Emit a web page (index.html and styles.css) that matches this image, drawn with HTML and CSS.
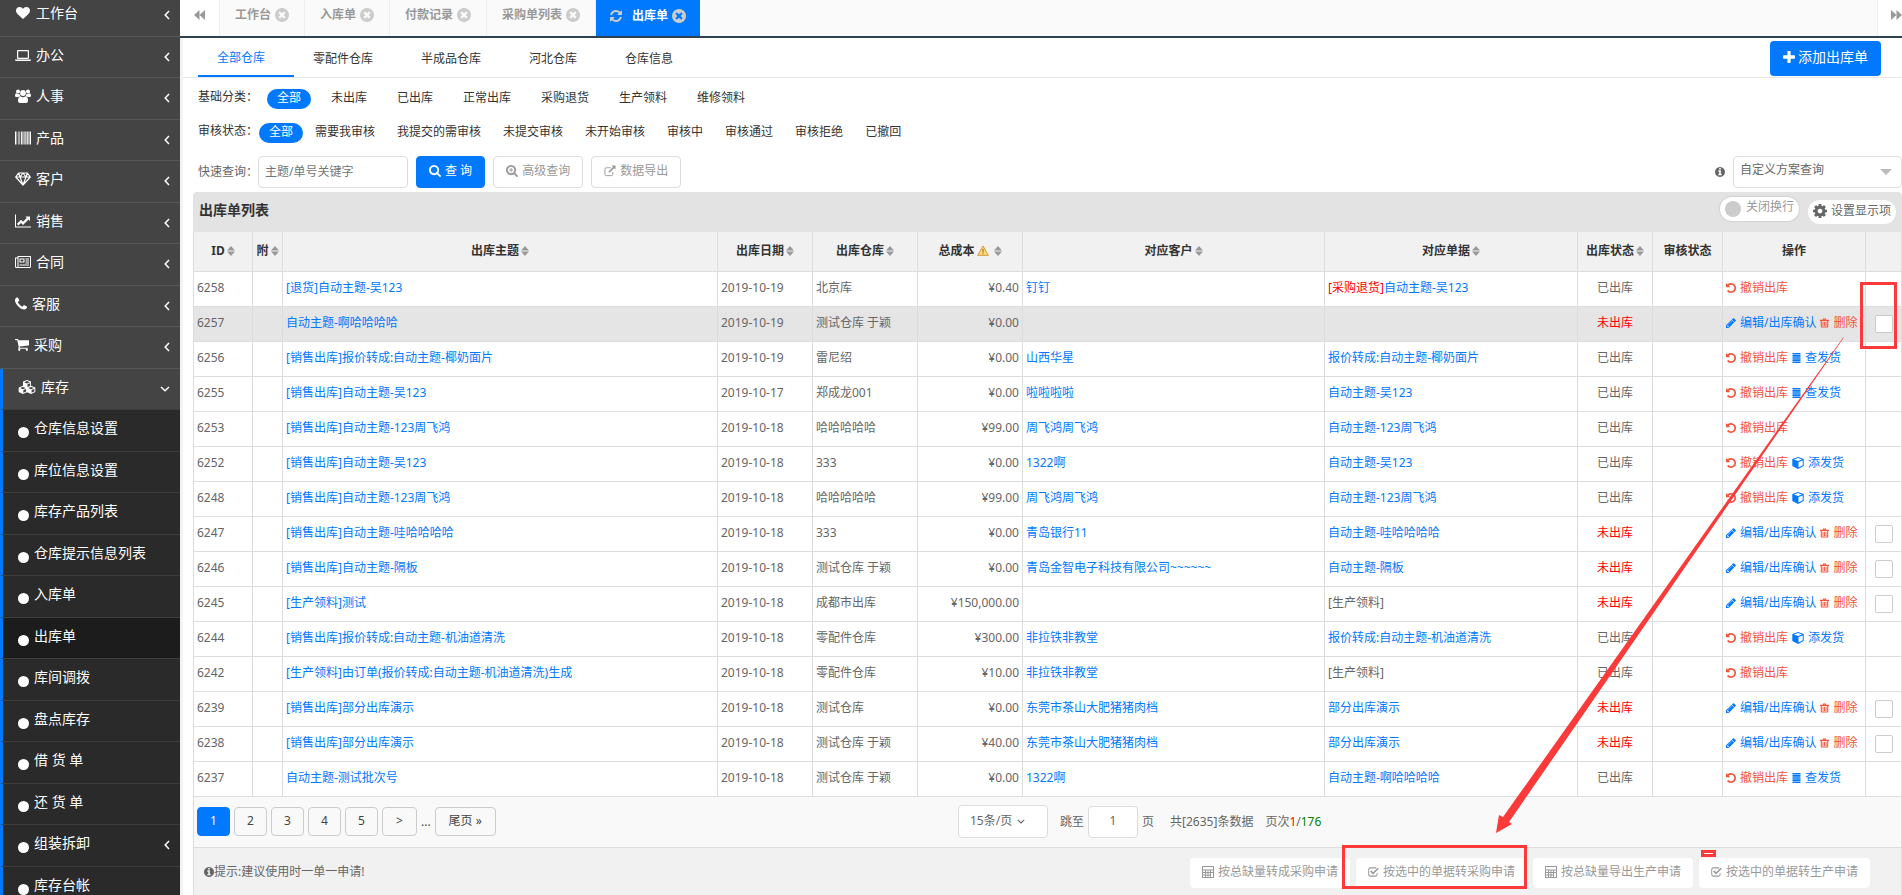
FILE: index.html
```html
<!DOCTYPE html>
<html lang="zh-CN">
<head>
<meta charset="utf-8">
<title>出库单</title>
<link rel="stylesheet" href="styles.css">
</head>
<body>
<svg class="defs" aria-hidden="true">
<symbol id="heart" viewBox="0 0 1792 1792"><path d="M896 1664q-26 0-44-18l-624-602q-10-8-27.500-26t-55.500-65.500-68-97.500-53.500-121-23.500-138q0-220 127-344t351-124q62 0 126.500 21.500t120 58 95.500 68.500 76 68q36-36 76-68t95.500-68.500 120-58 126.500-21.500q224 0 351 124t127 344q0 221-229 450l-623 600q-18 18-44 18z"/></symbol>
<symbol id="laptop" viewBox="0 0 16 14"><path fill-rule="evenodd" d="M3 2h10a1 1 0 0 1 1 1v7a1 1 0 0 1-1 1H3a1 1 0 0 1-1-1V3a1 1 0 0 1 1-1zm.2 1.200v6.600h9.600V3.200zM0 11.500h16v.8q0 .7-1.500.7h-13Q0 13 0 12.300z"/></symbol>
<symbol id="users" viewBox="0 0 16 14"><circle cx="3" cy="2.400" r="2"/><circle cx="13" cy="2.400" r="2"/><circle cx="8" cy="4" r="2.900"/><path d="M0 6.500Q0 4.300 1.500 4.300q1.500 1 3 .4Q4.600 6.300 5.400 7 4 7.200 3.300 8H1.200Q0 8 0 6.500zM16 6.500q0-2.200-1.500-2.200-1.500 1-3 .4-.1 1.600-.9 2.300 1.400.2 2.100 1h2.100Q16 8 16 6.500zM3 12q0-4.600 2.500-4.700Q8 9 10.500 7.300 13 7.400 13 12q0 2-2 2H5q-2 0-2-2z"/></symbol>
<symbol id="barcode" viewBox="0 0 15 12"><path d="M0 0h1v12H0zM1.500 0h.5v12h-.5zM3 0h.5v12H3zM4 0h.5v12H4zM5.500 0h1v12h-1zM7 0h.5v12H7zM8 0h1v12H8zM9.700 0h.8v12h-.8zM11 0h1v12h-1zM12.500 0h.5v12h-.5zM13.600 0H15v12h-1.400z"/></symbol>
<symbol id="diamond" viewBox="0 0 16 14"><path fill="none" stroke="currentColor" stroke-width="1.200" stroke-linejoin="round" d="M3.600 1h8.800L15.300 5 8 13 .7 5zM.7 5h14.600M8 1L5 5l3 8 3-8zM3.600 1L5 5M12.400 1L11 5"/></symbol>
<symbol id="chart" viewBox="0 0 16 13"><path d="M0 0h1v12h15v1H0z"/><path d="M2 9.300L6 5.200l2 2L11.800 3.400 10.500 2H15v4.500L13.500 5 8 10.500l-2-2-2.700 2.600z"/></symbol>
<symbol id="news" viewBox="0 0 16 12"><path fill-rule="evenodd" d="M2.500 0H16v10.500q0 1.500-1.500 1.500h-13Q0 12 0 10.500V1.500h2.500zM1 2.500v8q0 .5.700.5t.8-.5v-8zM3.500 1v9.500q0 .3-.1.500h11q.6 0 .6-.5V1zM4.500 2.500h5v4h-5zm1 1v2h3v-2zM10.500 2.500H14v1h-3.500zM10.500 4.500H14v1h-3.500zM10.500 6.500H14v1h-3.500zM4.500 8.500H14v1H4.500z"/></symbol>
<symbol id="phone" viewBox="192 192 1408 1408"><path d="M1600 1240q0 27-10 70.500t-21 68.500q-21 50-122 106-94 51-186 51-27 0-53-3.500t-57.500-12.500-47-14.500-55.500-20.500-49-18q-98-35-175-83-127-79-264-216t-216-264q-48-77-83-175-3-9-18-49t-20.500-55.500-14.500-47-12.500-57.500-3.500-53q0-92 51-186 56-101 106-122 25-11 68.500-21t70.500-10q14 0 21 3 18 6 53 76 11 19 30 54t35 63.500 31 53.500q3 4 17.500 25t21.500 35.500 7 28.500q0 20-28.500 50t-62 55-62 53-28.500 46q0 9 5 22.500t8.500 20.500 14 24 11.500 19q76 137 174 235t235 174q2 1 19 11.500t24 14 20.500 8.500 22.500 5q18 0 46-28.500t53-62 55-62 50-28.500q14 0 28.500 7t35.500 21.500 25 17.500q25 15 53.500 31t63.500 35 54 30q70 35 76 53 3 7 3 21z"/></symbol>
<symbol id="cart" viewBox="64 128 1664 1664"><path d="M704 1536q0 52-38 90t-90 38-90-38-38-90 38-90 90-38 90 38 38 90zm896 0q0 52-38 90t-90 38-90-38-38-90 38-90 90-38 90 38 38 90zm128-1088v512q0 24-16.500 42.500t-40.500 21.500l-1044 122q13 60 13 70 0 16-24 64h920q26 0 45 19t19 45-19 45-45 19h-1024q-26 0-45-19t-19-45q0-11 8-31.500t16-36 21.500-40 15.500-29.500l-177-823h-204q-26 0-45-19t-19-45 19-45 45-19h256q16 0 28.500 6.500t19.500 15.500 13 24.500 8 26 5.500 29.500 4.500 26h1201q26 0 45 19t19 45z"/></symbol>
<symbol id="cubes" viewBox="0 0 18 14"><path fill-rule="evenodd" d="M9 0l4 1.600v4.200l4.300 1.800v4.500L13.200 14 9 12.200 4.800 14 .7 12.100V7.600L5 5.800V1.600zM9 1.100L6.200 2.200 9 3.400l2.800-1.200zM9.500 4.300v2.600l2.600-1V3.200zM4.900 6.900L2.100 8l2.800 1.200L7.700 8zM5.400 10.100v2.600l2.700-1.200V8.900zM13.100 6.900L10.300 8l2.800 1.200L15.900 8zM13.600 10.100v2.600l2.700-1.200V8.900z"/></symbol>
<symbol id="left" viewBox="0 0 6 10"><path fill="none" stroke="currentColor" stroke-width="1.500" d="M5 1L1.200 5 5 9"/></symbol>
<symbol id="down" viewBox="0 0 10 6"><path fill="none" stroke="currentColor" stroke-width="1.500" d="M1 1l4 3.800L9 1"/></symbol>
<symbol id="backward" viewBox="0 0 11 10"><path d="M5.500 0v10L0 5zM11 0v10L5.500 5z"/></symbol>
<symbol id="forward" viewBox="0 0 11 10"><path d="M0 0v10l5.500-5zM5.500 0v10L11 5z"/></symbol>
<symbol id="close" viewBox="128 128 1536 1536"><path d="M1277 1122q0-26-19-45l-181-181 181-181q19-19 19-45 0-27-19-46l-90-90q-19-19-46-19-26 0-45 19l-181 181-181-181q-19-19-45-19-27 0-46 19l-90 90q-19 19-19 46 0 26 19 45l181 181-181 181q-19 19-19 45 0 27 19 46l90 90q19 19 46 19 26 0 45-19l181-181 181 181q19 19 45 19 27 0 46-19l90-90q19-19 19-46zm387-226q0 209-103 385.500t-279.500 279.500-385.500 103-385.500-103-279.500-279.500-103-385.500 103-385.500 279.500-279.500 385.500-103 385.500 103 279.500 279.500 103 385.500z"/></symbol>
<symbol id="info" viewBox="128 128 1536 1536"><path d="M1152 1376v-160q0-14-9-23t-23-9h-96v-512q0-14-9-23t-23-9h-320q-14 0-23 9t-9 23v160q0 14 9 23t23 9h96v320h-96q-14 0-23 9t-9 23v160q0 14 9 23t23 9h448q14 0 23-9t9-23zm-128-896v-160q0-14-9-23t-23-9h-192q-14 0-23 9t-9 23v160q0 14 9 23t23 9h192q14 0 23-9t9-23zm640 416q0 209-103 385.500t-279.500 279.500-385.500 103-385.500-103-279.500-279.500-103-385.500 103-385.500 279.500-279.500 385.500-103 385.500 103 279.500 279.500 103 385.500z"/></symbol>
<symbol id="refresh" viewBox="128 128 1536 1536"><path d="M1639 1056q0 5-1 7-64 268-268 434.500t-478 166.500q-146 0-282.500-55t-243.500-157l-129 129q-19 19-45 19t-45-19-19-45v-448q0-26 19-45t45-19h448q26 0 45 19t19 45-19 45l-137 137q71 66 161 102t187 36q134 0 250-65t186-179q11-17 53-117 8-23 30-23h192q13 0 22.500 9.500t9.500 22.500zm25-800v448q0 26-19 45t-45 19h-448q-26 0-45-19t-19-45 19-45l138-138q-148-137-349-137-134 0-250 65t-186 179q-11 17-53 117-8 23-30 23h-199q-13 0-22.500-9.500t-9.500-22.500v-7q65-268 270-434.500t480-166.500q146 0 284 55.500t245 156.500l130-129q19-19 45-19t45 19 19 45z"/></symbol>
<symbol id="plus" viewBox="192 128 1408 1408"><path d="M1600 736v192q0 40-28 68t-68 28h-416v416q0 40-28 68t-68 28h-192q-40 0-68-28t-28-68v-416h-416q-40 0-68-28t-28-68v-192q0-40 28-68t68-28h416v-416q0-40 28-68t68-28h192q40 0 68 28t28 68v416h416q40 0 68 28t28 68z"/></symbol>
<symbol id="search" viewBox="64 128 1664 1664"><path d="M1216 832q0-185-131.500-316.500t-316.500-131.500-316.500 131.500-131.500 316.500 131.500 316.500 316.500 131.500 316.500-131.500 131.500-316.500zm512 832q0 52-38 90t-90 38q-54 0-90-38l-343-342q-179 124-399 124-143 0-273.500-55.500t-225-150-150-225-55.500-273.500 55.500-273.500 150-225 225-150 273.500-55.500 273.500 55.500 225 150 150 225 55.500 273.500q0 220-124 399l343 343q37 37 37 90z"/></symbol>
<symbol id="searchplus" viewBox="64 128 1664 1664"><path d="M1216 832q0-185-131.500-316.500t-316.500-131.500-316.500 131.500-131.500 316.500 131.500 316.500 316.500 131.500 316.500-131.500 131.500-316.500zm512 832q0 52-38 90t-90 38q-54 0-90-38l-343-342q-179 124-399 124-143 0-273.500-55.500t-225-150-150-225-55.500-273.500 55.500-273.500 150-225 225-150 273.500-55.500 273.500 55.500 225 150 150 225 55.500 273.500q0 220-124 399l343 343q37 37 37 90z"/><path d="M704 544h128v224h224v128H832v224H704V896H480V768h224z"/></symbol>
<symbol id="export" viewBox="0 0 13 12"><path fill="none" stroke="currentColor" d="M7.500 2.500h-5a1.500 1.500 0 0 0-1.500 1.500v5.500A1.500 1.500 0 0 0 2.500 11H8a1.500 1.500 0 0 0 1.500-1.500V7"/><path d="M8 0h4.500v4.500L11 3 6 8 4.700 6.700l5-5z"/></symbol>
<symbol id="cog" viewBox="128 128 1536 1536"><path d="M1152 896q0-106-75-181t-181-75-181 75-75 181 75 181 181 75 181-75 75-181zm512-109v222q0 12-8 23t-20 13l-185 28q-19 54-39 91 35 50 107 138 10 12 10 25t-9 23q-27 37-99 108t-94 71q-12 0-26-9l-138-108q-44 23-91 38-16 136-29 186-7 28-36 28h-222q-14 0-24.500-8.500t-11.500-21.500l-28-184q-49-16-90-37l-141 107q-10 9-25 9-14 0-25-11-126-114-165-168-7-10-7-23 0-12 8-23 15-21 51-66.500t54-70.500q-27-50-41-99l-183-27q-13-2-21-12.500t-8-23.500v-222q0-12 8-23t19-13l186-28q14-46 39-92-40-57-107-138-10-12-10-24 0-10 9-23 26-36 98.500-107.500t94.500-71.500q13 0 26 10l138 107q44-23 91-38 16-136 29-186 7-28 36-28h222q14 0 24.500 8.500t11.500 21.500l28 184q49 16 90 37l142-107q9-9 24-9 13 0 25 10 129 119 165 170 7 8 7 22 0 12-8 23-15 21-51 66.500t-54 70.500q26 50 41 98l183 28q13 2 21 12.500t8 23.500z"/></symbol>
<symbol id="sort" viewBox="0 0 8 10"><path d="M4 0l4 4.500H0zM0 5.500h8L4 10z"/></symbol>
<symbol id="warn" viewBox="0 0 12 11"><path fill="#f9dc7c" stroke="#d39a35" stroke-linejoin="round" d="M6 1l5.300 9.300H.7z"/><path fill="#a8701c" d="M5.400 4h1.200v3.500H5.400zM5.400 8.200h1.200v1.100H5.400z"/></symbol>
<symbol id="undo" viewBox="128 128 1536 1536"><path d="M1664 896q0 156-61 298t-164 245-245 164-298 61q-172 0-327-72.500t-264-204.500q-7-10-6.500-22.500t8.500-20.500l137-138q10-9 25-9 16 2 23 12 73 95 179 147t225 52q104 0 198.500-40.500t163.500-109.500 109.500-163.500 40.500-198.500-40.500-198.500-109.500-163.500-163.500-109.500-198.500-40.500q-98 0-188 35.500t-160 101.500l137 138q31 30 14 69-17 40-59 40h-448q-26 0-45-19t-19-45v-448q0-42 40-59 39-17 69 14l130 129q107-101 244.500-156.500t284.500-55.500q156 0 298 61t245 164 164 245 61 298z"/></symbol>
<symbol id="pencil" viewBox="128 128 1536 1536"><path d="M491 1536l91-91-235-235-91 91v107h128v128h107zm523-928q0-22-22-22-10 0-17 7l-542 542q-7 7-7 17 0 22 22 22 10 0 17-7l542-542q7-7 7-17zm-54-192l416 416-832 832h-416v-416zm683 96q0 53-37 90l-166 166-416-416 166-165q36-38 90-38 53 0 91 38l235 234q37 39 37 91z"/></symbol>
<symbol id="trash" viewBox="0 0 10 10"><path fill-rule="evenodd" d="M0 1.500h3L3.500 0h3L7 1.500h3v1.200H9.200V9q0 1-1 1H1.800q-1 0-1-1V2.700H0zm4 0h2L5.800 1H4.200zM2 2.700V9h6V2.700zM2.800 3.500h1V8.200h-1zM4.500 3.500h1V8.200h-1zM6.200 3.500h1V8.200h-1z"/></symbol>
<symbol id="lines" viewBox="0 0 9 10"><path d="M.5 0h8v1.600h-8zM.5 2.100h8v1.600h-8zM.5 4.200h8v1.600h-8zM.5 6.300h8v1.600h-8zM.5 8.400h8V10h-8z"/></symbol>
<symbol id="cube" viewBox="0 0 12 12"><path fill-rule="evenodd" d="M6 0l5.700 2v7L6 12 .3 9V2zM6 1.100L2 2.500 6 4l4-1.500zM6.500 5v5.500l4.200-2.200V3.500z"/></symbol>
<symbol id="calc" viewBox="0 0 12 12"><path fill-rule="evenodd" d="M0 0h12v12H0zM1 1v2.500h10V1zM1 4.500V6h2V4.500zM4 4.500V6h1.500V4.500zM6.500 4.500V6H8V4.500zM9 4.500V6h2V4.500zM1 7v1.500h2V7zM4 7v1.500h1.500V7zM6.500 7v1.500H8V7zM9 7v4h2V7zM1 9.500V11h2V9.500zM4 9.500V11h1.500V9.500zM6.500 9.500V11H8V9.500z"/></symbol>
<symbol id="check" viewBox="0 0 12 11"><path fill="none" stroke="currentColor" stroke-width="1.100" d="M9 1H2.500A1.700 1.700 0 0 0 .8 2.700v5.600A1.700 1.700 0 0 0 2.500 10h5.700a1.700 1.700 0 0 0 1.700-1.700V6.500"/><path d="M2.300 4.900l1.200-1.200 2 2L10.600.8l1.200 1.200-6.300 6.100z"/></symbol>
</svg>

<div class="app">
<nav class="side">
  <ul class="menu">
    <li><a href="#"><svg class="i16"><use href="#heart"/></svg>工作台<svg class="arrow"><use href="#left"/></svg></a></li>
    <li><a href="#"><svg class="i16"><use href="#laptop"/></svg>办公<svg class="arrow"><use href="#left"/></svg></a></li>
    <li><a href="#"><svg class="i16"><use href="#users"/></svg>人事<svg class="arrow"><use href="#left"/></svg></a></li>
    <li><a href="#"><svg class="i16"><use href="#barcode"/></svg>产品<svg class="arrow"><use href="#left"/></svg></a></li>
    <li><a href="#"><svg class="i16"><use href="#diamond"/></svg>客户<svg class="arrow"><use href="#left"/></svg></a></li>
    <li><a href="#"><svg class="i16"><use href="#chart"/></svg>销售<svg class="arrow"><use href="#left"/></svg></a></li>
    <li><a href="#"><svg class="i16"><use href="#news"/></svg>合同<svg class="arrow"><use href="#left"/></svg></a></li>
    <li><a href="#"><svg class="i12"><use href="#phone"/></svg>客服<svg class="arrow"><use href="#left"/></svg></a></li>
    <li><a href="#"><svg class="i14"><use href="#cart"/></svg>采购<svg class="arrow"><use href="#left"/></svg></a></li>
    <li class="open"><a href="#"><svg class="i18"><use href="#cubes"/></svg>库存<svg class="arrow arrow-down"><use href="#down"/></svg></a></li>
    <li class="sub"><a href="#"><i class="dot"></i>仓库信息设置</a></li>
    <li class="sub"><a href="#"><i class="dot"></i>库位信息设置</a></li>
    <li class="sub"><a href="#"><i class="dot"></i>库存产品列表</a></li>
    <li class="sub"><a href="#"><i class="dot"></i>仓库提示信息列表</a></li>
    <li class="sub"><a href="#"><i class="dot"></i>入库单</a></li>
    <li class="sub current"><a href="#"><i class="dot"></i>出库单</a></li>
    <li class="sub"><a href="#"><i class="dot"></i>库间调拨</a></li>
    <li class="sub"><a href="#"><i class="dot"></i>盘点库存</a></li>
    <li class="sub"><a href="#"><i class="dot"></i>借 货 单</a></li>
    <li class="sub"><a href="#"><i class="dot"></i>还 货 单</a></li>
    <li class="sub"><a href="#"><i class="dot"></i>组装拆卸<svg class="arrow"><use href="#left"/></svg></a></li>
    <li class="sub"><a href="#"><i class="dot"></i>库存台帐</a></li>
  </ul>
</nav>

<div class="main">
  <div class="tabs">
    <button class="roll" aria-label="向左"><svg><use href="#backward"/></svg></button>
    <a class="tab" href="#">工作台<svg><use href="#close"/></svg></a>
    <a class="tab" href="#">入库单<svg><use href="#close"/></svg></a>
    <a class="tab" href="#">付款记录<svg><use href="#close"/></svg></a>
    <a class="tab" href="#">采购单列表<svg><use href="#close"/></svg></a>
    <a class="tab active" href="#"><svg class="reload"><use href="#refresh"/></svg>出库单<svg><use href="#close"/></svg></a>
    <button class="roll roll-right" aria-label="向右"><svg><use href="#forward"/></svg></button>
  </div>

  <div class="page">
    <div class="stores">
      <a class="on" href="#">全部仓库</a><a href="#">零配件仓库</a><a href="#">半成品仓库</a><a href="#">河北仓库</a><a href="#">仓库信息</a>
      <button class="add"><svg><use href="#plus"/></svg>添加出库单</button>
    </div>

    <div class="filter">
      <span class="label">基础分类：</span>
      <div class="opts wide"><a class="on" href="#">全部</a><a href="#">未出库</a><a href="#">已出库</a><a href="#">正常出库</a><a href="#">采购退货</a><a href="#">生产领料</a><a href="#">维修领料</a></div>
    </div>
    <div class="filter">
      <span class="label">审核状态：</span>
      <div class="opts"><a class="on" href="#">全部</a><a href="#">需要我审核</a><a href="#">我提交的需审核</a><a href="#">未提交审核</a><a href="#">未开始审核</a><a href="#">审核中</a><a href="#">审核通过</a><a href="#">审核拒绝</a><a href="#">已撤回</a></div>
    </div>

    <div class="query">
      <label class="label" for="kw">快速查询：</label>
      <input id="kw" class="kw" type="text" placeholder="主题/单号关键字">
      <button class="btn primary"><svg><use href="#search"/></svg>查 询</button>
      <button class="btn"><svg><use href="#searchplus"/></svg>高级查询</button>
      <button class="btn"><svg><use href="#export"/></svg>数据导出</button>
      <svg class="plan-info"><use href="#info"/></svg>
      <div class="plan"><select aria-label="自定义方案查询"><option>自定义方案查询</option></select></div>
    </div>

    <section class="panel">
      <header class="panel-head">
        <h2>出库单列表</h2>
        <button class="toggle"><i></i>关闭换行</button>
        <button class="setting"><svg><use href="#cog"/></svg>设置显示项</button>
      </header>
      <table>
        <colgroup><col class="c-id"><col class="c-att"><col><col class="c-date"><col class="c-store"><col class="c-cost"><col class="c-cust"><col class="c-doc"><col class="c-state"><col class="c-audit"><col class="c-act"><col class="c-check"></colgroup>
        <thead><tr>
          <th>ID<svg class="sort"><use href="#sort"/></svg></th>
          <th>附<svg class="sort"><use href="#sort"/></svg></th>
          <th>出库主题<svg class="sort"><use href="#sort"/></svg></th>
          <th>出库日期<svg class="sort"><use href="#sort"/></svg></th>
          <th>出库仓库<svg class="sort"><use href="#sort"/></svg></th>
          <th>总成本<svg class="warn"><use href="#warn"/></svg><svg class="sort"><use href="#sort"/></svg></th>
          <th>对应客户<svg class="sort"><use href="#sort"/></svg></th>
          <th>对应单据<svg class="sort"><use href="#sort"/></svg></th>
          <th>出库状态<svg class="sort"><use href="#sort"/></svg></th>
          <th>审核状态</th><th>操作</th><th></th>
        </tr></thead>
        <tbody>
        <tr><td>6258</td><td></td><td><a href="#">[退货]自动主题-吴123</a></td><td>2019-10-19</td><td>北京库</td><td class="num">¥0.40</td><td><a href="#">钉钉</a></td><td><span class="red">[采购退货]</span><a href="#">自动主题-吴123</a></td><td class="mid">已出库</td><td></td><td class="act"><a class="warnlink" href="#"><svg><use href="#undo"/></svg>撤销出库</a></td><td></td></tr>
        <tr class="hover"><td>6257</td><td></td><td><a href="#">自动主题-啊哈哈哈哈</a></td><td>2019-10-19</td><td>测试仓库 于颖</td><td class="num">¥0.00</td><td></td><td></td><td class="mid red">未出库</td><td></td><td class="act"><a href="#"><svg><use href="#pencil"/></svg>编辑/出库确认</a><a class="warnlink" href="#"><svg class="s9"><use href="#trash"/></svg>删除</a></td><td class="pick"><input type="checkbox" aria-label="选择 6257"></td></tr>
        <tr><td>6256</td><td></td><td><a href="#">[销售出库]报价转成:自动主题-椰奶面片</a></td><td>2019-10-19</td><td>雷尼绍</td><td class="num">¥0.00</td><td><a href="#">山西华星</a></td><td><a href="#">报价转成:自动主题-椰奶面片</a></td><td class="mid">已出库</td><td></td><td class="act"><a class="warnlink" href="#"><svg><use href="#undo"/></svg>撤销出库</a><a href="#"><svg class="s9"><use href="#lines"/></svg>查发货</a></td><td></td></tr>
        <tr><td>6255</td><td></td><td><a href="#">[销售出库]自动主题-吴123</a></td><td>2019-10-17</td><td>郑成龙001</td><td class="num">¥0.00</td><td><a href="#">啦啦啦啦</a></td><td><a href="#">自动主题-吴123</a></td><td class="mid">已出库</td><td></td><td class="act"><a class="warnlink" href="#"><svg><use href="#undo"/></svg>撤销出库</a><a href="#"><svg class="s9"><use href="#lines"/></svg>查发货</a></td><td></td></tr>
        <tr><td>6253</td><td></td><td><a href="#">[销售出库]自动主题-123周飞鸿</a></td><td>2019-10-18</td><td>哈哈哈哈哈</td><td class="num">¥99.00</td><td><a href="#">周飞鸿周飞鸿</a></td><td><a href="#">自动主题-123周飞鸿</a></td><td class="mid">已出库</td><td></td><td class="act"><a class="warnlink" href="#"><svg><use href="#undo"/></svg>撤销出库</a></td><td></td></tr>
        <tr><td>6252</td><td></td><td><a href="#">[销售出库]自动主题-吴123</a></td><td>2019-10-18</td><td>333</td><td class="num">¥0.00</td><td><a href="#">1322啊</a></td><td><a href="#">自动主题-吴123</a></td><td class="mid">已出库</td><td></td><td class="act"><a class="warnlink" href="#"><svg><use href="#undo"/></svg>撤销出库</a><a href="#"><svg class="s12"><use href="#cube"/></svg>添发货</a></td><td></td></tr>
        <tr><td>6248</td><td></td><td><a href="#">[销售出库]自动主题-123周飞鸿</a></td><td>2019-10-18</td><td>哈哈哈哈哈</td><td class="num">¥99.00</td><td><a href="#">周飞鸿周飞鸿</a></td><td><a href="#">自动主题-123周飞鸿</a></td><td class="mid">已出库</td><td></td><td class="act"><a class="warnlink" href="#"><svg><use href="#undo"/></svg>撤销出库</a><a href="#"><svg class="s12"><use href="#cube"/></svg>添发货</a></td><td></td></tr>
        <tr><td>6247</td><td></td><td><a href="#">[销售出库]自动主题-哇哈哈哈哈</a></td><td>2019-10-18</td><td>333</td><td class="num">¥0.00</td><td><a href="#">青岛银行11</a></td><td><a href="#">自动主题-哇哈哈哈哈</a></td><td class="mid red">未出库</td><td></td><td class="act"><a href="#"><svg><use href="#pencil"/></svg>编辑/出库确认</a><a class="warnlink" href="#"><svg class="s9"><use href="#trash"/></svg>删除</a></td><td class="pick"><input type="checkbox" aria-label="选择 6247"></td></tr>
        <tr><td>6246</td><td></td><td><a href="#">[销售出库]自动主题-隔板</a></td><td>2019-10-18</td><td>测试仓库 于颖</td><td class="num">¥0.00</td><td><a href="#">青岛金智电子科技有限公司~~~~~~</a></td><td><a href="#">自动主题-隔板</a></td><td class="mid red">未出库</td><td></td><td class="act"><a href="#"><svg><use href="#pencil"/></svg>编辑/出库确认</a><a class="warnlink" href="#"><svg class="s9"><use href="#trash"/></svg>删除</a></td><td class="pick"><input type="checkbox" aria-label="选择 6246"></td></tr>
        <tr><td>6245</td><td></td><td><a href="#">[生产领料]测试</a></td><td>2019-10-18</td><td>成都市出库</td><td class="num">¥150,000.00</td><td></td><td>[生产领料]</td><td class="mid red">未出库</td><td></td><td class="act"><a href="#"><svg><use href="#pencil"/></svg>编辑/出库确认</a><a class="warnlink" href="#"><svg class="s9"><use href="#trash"/></svg>删除</a></td><td class="pick"><input type="checkbox" aria-label="选择 6245"></td></tr>
        <tr><td>6244</td><td></td><td><a href="#">[销售出库]报价转成:自动主题-机油道清洗</a></td><td>2019-10-18</td><td>零配件仓库</td><td class="num">¥300.00</td><td><a href="#">非拉铁非教堂</a></td><td><a href="#">报价转成:自动主题-机油道清洗</a></td><td class="mid">已出库</td><td></td><td class="act"><a class="warnlink" href="#"><svg><use href="#undo"/></svg>撤销出库</a><a href="#"><svg class="s12"><use href="#cube"/></svg>添发货</a></td><td></td></tr>
        <tr><td>6242</td><td></td><td><a href="#">[生产领料]由订单(报价转成:自动主题-机油道清洗)生成</a></td><td>2019-10-18</td><td>零配件仓库</td><td class="num">¥10.00</td><td><a href="#">非拉铁非教堂</a></td><td>[生产领料]</td><td class="mid">已出库</td><td></td><td class="act"><a class="warnlink" href="#"><svg><use href="#undo"/></svg>撤销出库</a></td><td></td></tr>
        <tr><td>6239</td><td></td><td><a href="#">[销售出库]部分出库演示</a></td><td>2019-10-18</td><td>测试仓库</td><td class="num">¥0.00</td><td><a href="#">东莞市茶山大肥猪猪肉档</a></td><td><a href="#">部分出库演示</a></td><td class="mid red">未出库</td><td></td><td class="act"><a href="#"><svg><use href="#pencil"/></svg>编辑/出库确认</a><a class="warnlink" href="#"><svg class="s9"><use href="#trash"/></svg>删除</a></td><td class="pick"><input type="checkbox" aria-label="选择 6239"></td></tr>
        <tr><td>6238</td><td></td><td><a href="#">[销售出库]部分出库演示</a></td><td>2019-10-18</td><td>测试仓库 于颖</td><td class="num">¥40.00</td><td><a href="#">东莞市茶山大肥猪猪肉档</a></td><td><a href="#">部分出库演示</a></td><td class="mid red">未出库</td><td></td><td class="act"><a href="#"><svg><use href="#pencil"/></svg>编辑/出库确认</a><a class="warnlink" href="#"><svg class="s9"><use href="#trash"/></svg>删除</a></td><td class="pick"><input type="checkbox" aria-label="选择 6238"></td></tr>
        <tr><td>6237</td><td></td><td><a href="#">自动主题-测试批次号</a></td><td>2019-10-18</td><td>测试仓库 于颖</td><td class="num">¥0.00</td><td><a href="#">1322啊</a></td><td><a href="#">自动主题-啊哈哈哈哈</a></td><td class="mid">已出库</td><td></td><td class="act"><a class="warnlink" href="#"><svg><use href="#undo"/></svg>撤销出库</a><a href="#"><svg class="s9"><use href="#lines"/></svg>查发货</a></td><td></td></tr>
        </tbody>
      </table>

      <div class="pager">
        <div class="pages"><a class="on" href="#">1</a><a href="#">2</a><a href="#">3</a><a href="#">4</a><a href="#">5</a><a class="next" href="#">&gt;</a><span>...</span><a class="last" href="#">尾页 »</a></div>
        <div class="jump">
          <div class="size"><select aria-label="每页条数"><option>15条/页</option></select><svg><use href="#down"/></svg></div>
          <label for="go">跳至</label><input id="go" type="text" value="1"><span>页</span>
          <span class="total">共[2635]条数据</span><span>页次<b class="cur">1</b>/<b class="sum">176</b></span>
        </div>
      </div>

      <footer class="foot">
        <span class="tip"><svg><use href="#info"/></svg>提示:建议使用时一单一申请!</span>
        <button><svg><use href="#calc"/></svg>按总缺量转成采购申请</button>
        <button><svg class="narrow"><use href="#check"/></svg>按选中的单据转采购申请</button>
        <button><svg><use href="#calc"/></svg>按总缺量导出生产申请</button>
        <button><svg class="narrow"><use href="#check"/></svg>按选中的单据转生产申请</button>
      </footer>
    </section>
  </div>
</div>

<svg class="marks" viewBox="0 0 602 895" aria-hidden="true">
  <g fill="none" stroke="#fb3a39" stroke-width="3">
    <rect x="561.500" y="283.500" width="34" height="64"/>
    <rect x="43.500" y="846.500" width="182" height="41"/>
    <rect x="402.500" y="851.500" width="12" height="4" fill="#fff"/>
  </g>
  <path fill="#fb3a39" d="M196 833l3-18 4 2L543.300 337.300l.4.400L209 822l3 2z"/>
</svg>
</div>
</body>
</html>
```

FILE: styles.css
```css
* { box-sizing: border-box; }
body {
  margin: 0;
  font: 12px/18px "Noto Sans", "Noto Sans CJK SC", sans-serif;
  color: #666;
  background: #fff;
}
a { color: inherit; text-decoration: none; }
button, input, select { font: inherit; color: inherit; margin: 0; }
button { cursor: pointer; border: 0; background: none; padding: 0; }
svg { fill: currentColor; flex: none; }
.defs { display: none; }

.app {
  position: relative;
  display: flex;
  height: 100vh;
  overflow: hidden;
}

/* side menu */
.side { flex: 0 0 180px; background: #444; color: #fff; overflow: hidden; }
.menu { list-style: none; margin: 0; padding: 0; font-size: 14px; line-height: 20px; }
.menu li { height: 42px; border-bottom: 1px solid #575757; }
.menu li:nth-child(even) { height: 41px; }
.menu li:first-child { height: 37px; }
.menu a { display: flex; align-items: center; height: 100%; padding: 0 10px 5px 15px; }
.menu li:first-child a { padding-bottom: 11px; }
.menu svg { height: 14px; margin-right: 5px; }
.i12 { width: 12px; }
.i14 { width: 14px; }
.i16 { width: 16px; }
.i18 { width: 18px; }
.menu .arrow { width: 6px; height: 10px; margin: 4px 0 0 auto; }
.menu .arrow-down { width: 10px; }
.menu .open, .menu .sub { border-left: 3px solid #0079ff; }
.menu .open { border-bottom-color: #3d3d3d; }
.menu .sub { background: #2a2a2a; border-bottom-color: #3d3d3d; }
.menu .current { background: #1c1c1c; }
.dot { width: 11px; height: 11px; margin: 9px 5px 0 0; border-radius: 50%; background: #fff; }

/* window tabs */
.main { flex: 1; min-width: 0; display: flex; flex-direction: column; }
.tabs {
  flex: none;
  display: flex;
  height: 38px;
  background: #fafafa;
  border-bottom: 2px solid #2f4050;
  color: #999;
  font-weight: bold;
}
.roll { width: 40px; padding-bottom: 6px; background: #fff; border-right: 1px solid #eee; }
.roll svg { display: block; width: 11px; height: 10px; margin: 0 auto; }
.roll-right { width: 25px; margin-left: auto; border-right: 0; border-left: 1px solid #eee; }
.roll-right svg { margin: 0 0 0 13px; }
.tab { display: flex; align-items: center; padding: 0 15px 6px; border-right: 1px solid #eee; }
.tab svg { width: 14px; height: 14px; margin-left: 4px; color: #ccc; }
.tab.active { background: #0079ff; color: #fff; border: 0; padding: 0 14px 5px; }
.tab .reload { width: 12px; height: 12px; margin: 0 10px 0 0; }

/* page */
.page { flex: 1; border-left: 3px solid #f3f3f3; display: flex; flex-direction: column; }
.stores { display: flex; height: 40px; padding-left: 15px; border-bottom: 1px solid #e6e6e6; color: #333; }
.stores a { height: 39px; padding: 12px 29px 0 19px; }
.stores .on { padding-top: 11px; color: #0079ff; border-bottom: 2px solid #0079ff; }
.add {
  display: flex;
  align-items: center;
  justify-content: center;
  gap: 3px;
  width: 111px;
  height: 35px;
  margin: 3px 21px 0 auto;
  padding-bottom: 4px;
  border-radius: 4px;
  background: #0079ff;
  color: #fff;
  font-size: 14px;
}
.add svg { width: 12px; height: 12px; }

.filter { display: flex; height: 34px; padding: 10px 0 0 15px; color: #333; }
.label { width: 60px; }
.opts { display: flex; gap: 2px; padding: 1px 0 0 1px; }
.wide { gap: 10px; padding-left: 9px; }
.opts a { height: 20px; padding: 0 10px; }
.opts .on { background: #0079ff; color: #fff; border-radius: 10px; }

.query { display: flex; align-items: center; gap: 8px; height: 32px; margin: 10px 0 4px; padding-left: 15px; }
.query .label { width: 52px; white-space: nowrap; }
.kw { width: 150px; height: 32px; padding: 0 6px 2px; border: 1px solid #ddd; border-radius: 4px; outline: 0; }
.kw::placeholder { color: #757575; }
.btn {
  display: flex;
  align-items: center;
  gap: 4px;
  height: 32px;
  padding: 0 12px 2px;
  border: 1px solid #ddd;
  border-radius: 4px;
  background: #fff;
  color: #999;
}
.btn svg { width: 12px; height: 12px; }
.primary { background: #0079ff; border-color: #0079ff; color: #fff; }
.plan-info { width: 10px; height: 10px; margin-left: auto; }
.plan { position: relative; width: 169px; }
.plan select {
  display: block;
  width: 100%;
  height: 32px;
  padding: 0 6px 4px;
  border: 1px solid #ddd;
  border-radius: 4px;
  background: #fff;
  appearance: none;
}
.plan::after {
  content: "";
  position: absolute;
  right: 10px;
  top: 13px;
  border: 6px solid transparent;
  border-top-color: #bbb;
  pointer-events: none;
}

/* list panel */
.panel { flex: 1; margin-left: 10px; display: flex; flex-direction: column; }
.panel-head {
  display: flex;
  align-items: flex-start;
  height: 40px;
  padding: 0 6px;
  border-radius: 4px 4px 0 0;
  background: #e3e3e3;
}
.panel-head h2 { flex: 1; margin: 8px 0 0; font-size: 14px; line-height: 20px; color: #333; }
.toggle, .setting { display: flex; align-items: center; height: 24px; border-radius: 12px; background: #fff; }
.toggle { width: 79px; margin: 5px 9px 0 0; padding: 0 5px 4px; color: #999; gap: 5px; box-shadow: 0 0 1px 1px #d3d3d3; }
.toggle i { width: 16px; height: 16px; margin-top: 3px; border-radius: 50%; background: #ccc; }
.setting { width: 88px; margin-top: 8px; padding: 0 5px 3px; gap: 4px; }
.setting svg { width: 14px; height: 14px; }

table { width: 100%; table-layout: fixed; border-collapse: separate; border-spacing: 0; border-left: 1px solid #ddd; }
.c-id { width: 59px; }
.c-att { width: 30px; }
.c-date { width: 95px; }
.c-store { width: 105px; }
.c-cost { width: 105px; }
.c-cust { width: 302px; }
.c-doc { width: 253px; }
.c-state { width: 75px; }
.c-audit { width: 70px; }
.c-act { width: 143px; }
.c-check { width: 36px; }
th, td { border-right: 1px solid #ddd; border-bottom: 1px solid #ddd; white-space: nowrap; }
th { height: 40px; padding: 0 0 2px; background: #f1f1f1; color: #333; text-align: center; }
td { height: 35px; padding: 0 3px 2px; }
td a { color: #0079ff; }
th svg { vertical-align: -1px; }
.sort { width: 8px; height: 10px; margin-left: 2px; color: #999; }
.warn { width: 12px; height: 11px; margin: 0 3px 0 2px; }
.hover td { background: #e5e5e5; }
.num { text-align: right; }
.mid { text-align: center; }
.red { color: #f00; }
.act a { margin-right: 4px; }
.act a:last-child { margin-right: 0; }
.act svg { width: 10px; height: 10px; margin-right: 4px; vertical-align: -1px; }
.act .s9 { width: 9px; }
.act .s12 { width: 12px; height: 12px; vertical-align: -2px; }
.act .warnlink { color: #f4523b; }
.pick { padding: 0 8px 0 9px; }
.pick input {
  display: block;
  width: 18px;
  height: 18px;
  border: 1px solid #ccc;
  border-radius: 2px;
  background: #fff;
  appearance: none;
}

.pager { display: flex; align-items: center; height: 51px; padding-bottom: 1px; background: #f9f9f9; border: 1px solid #ddd; border-top: 0; }
.pages { flex: 0 0 764px; display: flex; align-items: center; gap: 4px; padding-left: 3px; color: #444; }
.pages a {
  width: 33px;
  height: 29px;
  padding-top: 4px;
  border: 1px solid #ccc;
  border-radius: 4px;
  text-align: center;
}
.pages .on { background: #0079ff; border-color: #0079ff; color: #fff; }
.pages .next { width: 35px; }
.pages .last { width: 61px; }
.jump { display: flex; align-items: center; gap: 4px; }
.size { position: relative; margin-right: 8px; }
.size select {
  display: block;
  width: 90px;
  height: 33px;
  padding: 0 11px 2px;
  border: 1px solid #ddd;
  border-radius: 4px;
  background: #fff;
  appearance: none;
}
.size svg { position: absolute; left: 59px; top: 14px; width: 8px; height: 5px; pointer-events: none; }
.jump input { width: 50px; height: 32px; padding: 0 0 2px; border: 1px solid #ddd; border-radius: 4px; text-align: center; outline: 0; }
.total { margin: 0 8px 0 12px; }
.jump b { font-weight: normal; }
.cur { color: #f00; }
.sum { color: #008000; }

.foot { flex: 1; display: flex; align-items: flex-start; gap: 6px; padding: 10px 31px 0 10px; background: #f1f1f1; border: 1px solid #ddd; border-width: 0 1px; }
.tip { flex: 1; display: flex; align-items: center; height: 28px; }
.tip svg { width: 10px; height: 10px; }
.foot button {
  display: flex;
  align-items: center;
  gap: 4px;
  height: 30px;
  padding: 0 12px 2px;
  border-radius: 4px;
  background: #fff;
  color: #999;
}
.foot button svg { width: 12px; height: 12px; }
.foot button .narrow { width: 11px; }

/* highlight marks over the page */
.marks { position: absolute; top: 0; right: 0; width: 602px; height: 895px; pointer-events: none; }
```
